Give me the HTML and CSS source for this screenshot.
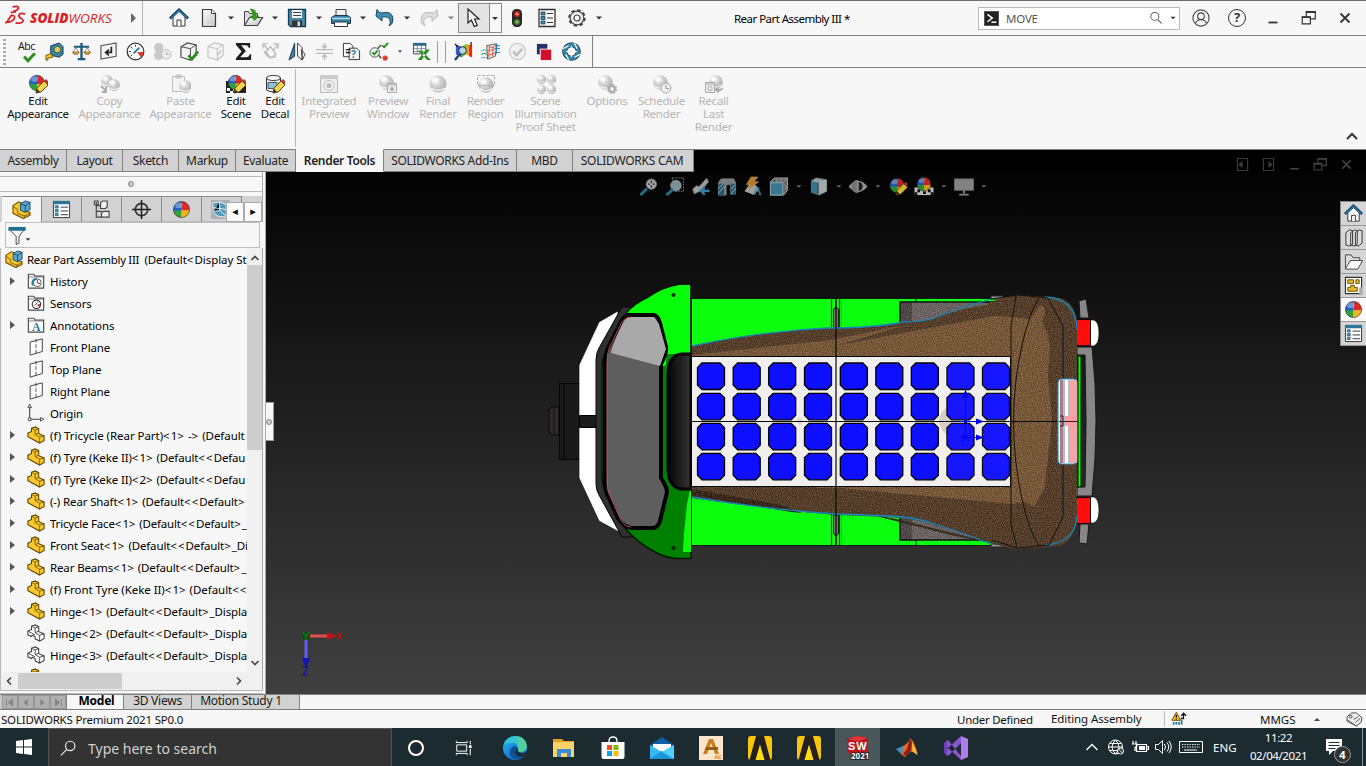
FILE: index.html
```html
<!DOCTYPE html>
<html lang="en">
<head>
<meta charset="utf-8">
<title>Rear Part Assembly III</title>
<link rel="stylesheet" href="styles.css">
</head>
<body>
<svg class="sprite" aria-hidden="true">
<defs>
<linearGradient id="gg" x1="0" y1="0" x2="1" y2="1"><stop offset="0" stop-color="#fff"/><stop offset="1" stop-color="#c4c4c4"/></linearGradient>
<radialGradient id="gs" cx=".35" cy=".3" r=".7"><stop offset="0" stop-color="#fff"/><stop offset=".5" stop-color="#d0d0d0"/><stop offset="1" stop-color="#b0b0b0"/></radialGradient>
<linearGradient id="edge" x1="0" y1="0" x2="1" y2="1"><stop offset="0" stop-color="#2cc3e8"/><stop offset=".5" stop-color="#1683d8"/><stop offset="1" stop-color="#0c59a4"/></linearGradient>
</defs>
<symbol id="dd" viewBox="0 0 22 20"><path d="M8 8.500h6l-3 3z" fill="#333"/></symbol>
<symbol id="home" viewBox="0 0 20 20"><path d="M4 9v9h12V9l-6-6z" fill="#f8f8f8" stroke="#333"/><path d="M8 18v-6h4v6" fill="#fff" stroke="#333"/><path d="M1 10.500L10 2l9 8.500" fill="none" stroke="#12405c" stroke-width="3"/><path d="M2 10L10 2.500 18 10" fill="none" stroke="#2f83ab" stroke-width="1.200"/></symbol>
<symbol id="new" viewBox="0 0 20 20"><path d="M3.500 1.500h9l4 4v13h-13z" fill="url(#gg)" stroke="#3a3a3a" stroke-width="1.200"/><path d="M12.500 1.500v4h4" fill="#fff" stroke="#3a3a3a"/></symbol>
<symbol id="open" viewBox="0 0 20 20"><path d="M1.500 17.500v-14h4l1 2h8v3" fill="#ddd" stroke="#444"/><path d="M1.500 17.500l5-8h13l-5 8z" fill="url(#gg)" stroke="#444" stroke-width="1.200"/><path d="M7 1q7 0 6 7h3l-4.500 4.500L7.500 8H10q0-4-3-7z" fill="#36a01c" stroke="#217010" stroke-width=".5"/></symbol>
<symbol id="save" viewBox="0 0 20 20"><path d="M1.500 1.500h17v17H3.500l-2-2z" fill="#4389ab" stroke="#173a50" stroke-width="1.300"/><path d="M5 2h10v8H5z" fill="#f4f4f4"/><path d="M6 4.500h8M6 7.500h8" stroke="#444"/><path d="M5 12.500h10V18H5z" fill="#333"/><path d="M10.500 13.500h2.500V18h-2.500z" fill="#ddd"/></symbol>
<symbol id="print" viewBox="0 0 20 20"><path d="M5 9V1.500h10V9" fill="#eee" stroke="#444"/><path d="M.5 9.500l3-2h13l3 2v6h-19z" fill="#3583a8" stroke="#173a50"/><path d="M1 10.500h18" stroke="#b8e4f5" stroke-width="1.500"/><path d="M3.500 14h13v4.500h-13z" fill="#fff" stroke="#333"/></symbol>
<symbol id="undo" viewBox="0 0 20 20"><path d="M6 5q12-3 12 7 0 4-4 6 2-3 1-6-1-4-8-3v4L1 8 2 1.500l2.500 3z" fill="#438bb0" stroke="#174760"/></symbol>
<symbol id="redo" viewBox="0 0 20 20"><path d="M14 5Q2 2 2 12q0 4 4 6-2-3-1-6 1-4 8-3v4l6-5-1-6.500-2.500 3z" fill="#ddd" stroke="#bbb"/></symbol>
<symbol id="cursor" viewBox="0 0 20 20"><path d="M4 1v14l3.300-3 3 6.500 3-1.200L10.500 11H15z" fill="#f9f9f9" stroke="#222" stroke-width="1.200"/></symbol>
<symbol id="light" viewBox="0 0 20 20"><rect x="5" y="1" width="10" height="18" rx="4.500" fill="#272727"/><circle cx="10" cy="6" r="3" fill="#cc2413"/><circle cx="10" cy="14" r="3" fill="#37821f"/><path d="M10 4.500v3M8.500 6h3M10 12.500v3M8.500 14h3" stroke="#f4d2ca" stroke-width=".7"/></symbol>
<symbol id="list" viewBox="0 0 20 20"><path d="M2 1.500h16v17H2z" fill="#fafafa" stroke="#333" stroke-width="1.300"/><path d="M4 4h4v3H4zM4 8.500h4v3H4zM4 13h4v3H4z" fill="#3d8fb5" stroke="#173a50" stroke-width=".8"/><path d="M10 5.500h6M10 10h6M10 14.500h6" stroke="#333"/></symbol>
<symbol id="gear" viewBox="0 0 20 20"><circle cx="10" cy="10" r="7.800" fill="none" stroke="#444" stroke-width="2" stroke-dasharray="3.300 2.830"/><circle cx="10" cy="10" r="6.800" fill="#eee" stroke="#444" stroke-width="1.200"/><circle cx="10" cy="10" r="3" fill="#f7f7f7" stroke="#444" stroke-width="1.200"/></symbol>
<symbol id="tape" viewBox="0 0 20 20"><path d="M6 4l9-3 4 4v8l-4 3-9-2z" fill="#3b82a8" stroke="#173a50"/><circle cx="13" cy="8" r="3.500" fill="#e8c85a" stroke="#264"/><path d="M1 14l6-2 1 4-5 1v2H1z" fill="#f6c52a" stroke="#6b5300"/></symbol>
<symbol id="scale" viewBox="0 0 20 20"><path d="M10 1v16" stroke="#1d5a7a" stroke-width="2.500"/><path d="M2 5h16M6 18h8" stroke="#1d5a7a" stroke-width="2.200"/><path d="M1 11l3-5 3 5zM13 11l3-5 3 5z" fill="#fff" stroke="#555" stroke-width=".7"/><path d="M.5 10.500h7L6 13H2zM12.500 10.500h7L18 13h-4z" fill="#e0a73a" stroke="#7b5310" stroke-width=".7"/></symbol>
<symbol id="meas" viewBox="0 0 20 20"><path d="M2 4l16-3v14L2 18z" fill="#f4f4f4" stroke="#555" stroke-width="1.200"/><path d="M13 5v6H8m2.500-3L7 11l3.500 3" fill="none" stroke="#222" stroke-width="1.800"/></symbol>
<symbol id="gauge" viewBox="0 0 20 20"><circle cx="10" cy="10" r="8.800" fill="#fafafa" stroke="#333" stroke-width="1.300"/><path d="M12 10.500h6.500a8 8 0 0 1-3 5.500z" fill="#dc3a24"/><path d="M10 3v2M3 10h2M5 5l1.500 1.500M5 15l1.500-1.500" stroke="#333"/><path d="M8 12l6-6" stroke="#2878a0" stroke-width="2"/></symbol>
<symbol id="perf" viewBox="0 0 20 20"><circle cx="6" cy="6" r="5" fill="#c9c9c9"/><circle cx="6" cy="14" r="5" fill="#c9c9c9"/><circle cx="14" cy="13" r="5" fill="#eee" stroke="#bbb"/><path d="M14 10v3h3" stroke="#aaa" fill="none"/></symbol>
<symbol id="cube" viewBox="0 0 20 20"><path d="M1 5l7-4 9 2v11l-6 5-10-3z" fill="#f5f5f5" stroke="#444" stroke-width="1.200"/><path d="M1 5l10 2 6-4M11 7v12" fill="none" stroke="#444"/></symbol>
<symbol id="cubeck" viewBox="0 0 20 20"><use href="#cube"/><path d="M9 14l3.500 4L19 10" fill="none" stroke="#2d8f1e" stroke-width="3"/></symbol>
<symbol id="cubeg" viewBox="0 0 20 20"><g opacity=".3"><use href="#cube"/><path d="M10 11l2 2 3-4" fill="none" stroke="#555" stroke-width="1.500"/></g></symbol>
<symbol id="sigma" viewBox="0 0 20 20"><path d="M2 1h15v5h-1.500Q15 3.500 12 3.500H7.500l5 6L6.500 16H13q3 0 3.500-3H18v6H2v-2l6-7-6-7z" fill="#1e1e1e"/></symbol>
<symbol id="arrg" viewBox="0 0 20 20"><path d="M5 10l5-5 6 8-6 4zM2 7V2h5M2 2l6 7M13 2h5v5M18 2l-5 7M3 10l5 6h8" fill="none" stroke="#bcbcbc" stroke-width="1.400"/></symbol>
<symbol id="mirror" viewBox="0 0 20 20"><path d="M7 1v14l-6 4z" fill="#3b82a8" stroke="#173a50"/><path d="M10 1v14l5 4V6zM14 8l4 5-3 6z" fill="#f4f4f4" stroke="#444"/></symbol>
<symbol id="thick" viewBox="0 0 20 20"><path d="M1 8h18M1 12h18M10 1v5M7.500 4L10 6.500 12.500 4M10 19v-5M7.500 16l2.500-2.500 2.500 2.500" fill="none" stroke="#bbb" stroke-width="1.500"/></symbol>
<symbol id="comp" viewBox="0 0 20 20"><circle cx="6" cy="11" r="5" fill="#eee" stroke="#555"/><path d="M3.500 11l2 2 3.500-4M14 3.500l2 2L20 1" fill="none" stroke="#2d8f1e" stroke-width="2"/><path d="M9 7l4-4M10 14l3 3" stroke="#333" stroke-width="1.300"/><path d="M15 15l4 4M19 15l-4 4M17 14v6M14 17h6" stroke="#d8321f" stroke-width="1.200"/></symbol>
<symbol id="xls" viewBox="0 0 20 20"><path d="M1.500 1.500h13v11h-13z" fill="#fff" stroke="#345"/><path d="M1 1h14v3H1z" fill="#2b6c8c"/><path d="M2 7h12M2 10h12M5.500 3v9M10 3v9" stroke="#678" stroke-width=".8"/><path d="M6 9h4l10 10h-4zM19 8h-4L6 19h4z" fill="#2a8f25"/></symbol>
<symbol id="sim" viewBox="0 0 20 20"><path d="M2 3l6 2 5-3 6 2v12l-6-3-5 3-6-3z" fill="#ef9c1f"/><path d="M8 5l5-3v11l-5 3z" fill="#57d24d"/><path d="M2 3l6 2v11l-6-3z" fill="#3858d0"/><path d="M16 3l3 1v12l-3-1z" fill="#e22"/><circle cx="9" cy="9" r="4" fill="#b5d4e2" stroke="#234"/><path d="M1 19l5-6" stroke="#174a68" stroke-width="2.500"/><path d="M1 2l3 3M18 0v4" stroke="#111" stroke-width="1.300"/></symbol>
<symbol id="flow" viewBox="0 0 20 20"><path d="M6 4l8-2 3 1-2 12-8 3z" fill="#f7e2da" stroke="#555"/><path d="M8 5l6 1M7 9l7-1M8 14l6-2M9 5l-1 11M13 4l-1 11" stroke="#d65b4b"/><path d="M0 10q4-4 6 0M0 14q4-4 6 0M0 17q4-2 6 0" fill="none" stroke="#2ca8c9"/><path d="M14 4h6M14 7h6M14 11h6M16 1v12" stroke="#1e80c0"/><path d="M1 12h5" stroke="#4aa63d"/></symbol>
<symbol id="okg" viewBox="0 0 20 20"><circle cx="10" cy="10" r="8.500" fill="#f0f0f0" stroke="#ccc" stroke-width="1.300"/><path d="M5.500 10l3.500 4 6-7" fill="none" stroke="#bdbdbd" stroke-width="2.500"/></symbol>
<symbol id="sq2" viewBox="0 0 20 20"><path d="M2 2h11v11H2z" fill="#25316d"/><path d="M5 7h12v12H5z" fill="#f7f7f7"/><path d="M6 8h11v11H6z" fill="#d2102c"/></symbol>
<symbol id="swirl" viewBox="0 0 20 20"><circle cx="10" cy="10" r="7" fill="none" stroke="#123c55" stroke-width="5.600"/><circle cx="10" cy="10" r="7" fill="none" stroke="#3a86a8" stroke-width="3.800"/><path d="M13 1l3 6M19 13l-6 3M7 19l-3-6M1 7l6-3" stroke="#f0f6f8" stroke-width="1.300"/><path d="M10 4l2 4 4 2-4 2-2 4-2-4-4-2 4-2z" fill="#fff"/></symbol>
<symbol id="ball" viewBox="0 0 20 20"><clipPath id="bc"><circle cx="10" cy="10" r="8.500"/></clipPath><g clip-path="url(#bc)"><path d="M0 0h10v12H0z" fill="#2362c9"/><path d="M10 0h10v11H10z" fill="#dc2b25"/><path d="M0 11h10v9H0z" fill="#2ea43a"/><path d="M10 11h10v9H10z" fill="#f2b51e"/><ellipse cx="7" cy="5.500" rx="4" ry="3" fill="#fff" opacity=".35"/></g><circle cx="10" cy="10" r="8.500" fill="none" stroke="#333" stroke-width=".7"/></symbol>
<symbol id="pencil" viewBox="0 0 20 20"><path d="M8 19l1-5 7-7 4 4-7 7z" fill="#f4d44a" stroke="#5a4300"/><path d="M16 7l2-2 3.500 3.500-2 2z" fill="#b33a3a"/><path d="M8 19l1-4 3 3z" fill="#333"/></symbol>
<symbol id="eapp" viewBox="0 0 20 20"><use href="#ball" width="18" height="18"/><use href="#pencil" width="20" height="20"/></symbol>
<symbol id="escene" viewBox="0 0 20 20"><path d="M0 7h20v12H0z" fill="#222"/><path d="M1 14h3v3H1zM7 14h3v3H7zM4 17h3v2H4zM16 8h3v3h-3z" fill="#fff"/><use href="#ball" x="1" width="17" height="17"/><use href="#pencil" width="20" height="20"/></symbol>
<symbol id="edecal" viewBox="0 0 20 20"><path d="M1.500 4v12q7 4 14 0V4" fill="#eee" stroke="#333"/><ellipse cx="8.500" cy="4" rx="7" ry="2.500" fill="#fff" stroke="#333"/><path d="M3 8.500h9v6H3z" fill="#8cc2dd" stroke="#555"/><use href="#pencil" width="20" height="20"/></symbol>
<symbol id="s1" viewBox="0 0 20 20"><circle cx="10" cy="10" r="8.500" fill="url(#gs)"/><ellipse cx="7" cy="6" rx="3.500" ry="2.500" fill="#fff" opacity=".7"/><path d="M3 14q7 5 14 0" fill="none" stroke="#f5f5f5" stroke-width="1.500"/></symbol>
<symbol id="copyg" viewBox="0 0 20 20"><use href="#s1" width="14" height="14"/><use href="#s1" x="7" y="4" width="14" height="14"/><path d="M1 12l5 5M6 13v5H2" fill="none" stroke="#aaa" stroke-width="1.800"/></symbol>
<symbol id="pasteg" viewBox="0 0 20 20"><path d="M1.500 2.500h12v15h-12zM5 1h5v3H5z" fill="#f4f4f4" stroke="#bbb"/><use href="#s1" x="7" y="5" width="15" height="15"/></symbol>
<symbol id="intg" viewBox="0 0 20 20"><path d="M1.500 1.500h17v17h-17z" fill="#eee" stroke="#bbb"/><path d="M1 1h18v4H1z" fill="#ccc"/><circle cx="10" cy="11.500" r="5" fill="#f5f5f5" stroke="#bbb"/><circle cx="10" cy="11.500" r="2.500" fill="#bbb"/></symbol>
<symbol id="prevg" viewBox="0 0 20 20"><use href="#s1" width="17" height="17"/><path d="M9.500 9.500h9v9h-9zM9 11h10" fill="#eee" stroke="#aaa"/><circle cx="14" cy="15" r="2" fill="#aaa"/></symbol>
<symbol id="regg" viewBox="0 0 20 20"><use href="#s1" y="2" width="20" height="18"/><path d="M1.500 1.500h17v10h-17z" fill="none" stroke="#aaa" stroke-dasharray="3 1.500"/></symbol>
<symbol id="quadg" viewBox="0 0 20 20"><use href="#s1" width="11" height="11"/><use href="#s1" x="10" width="11" height="11"/><use href="#s1" y="10" width="11" height="11"/><use href="#s1" x="10" y="10" width="11" height="11"/></symbol>
<symbol id="optg" viewBox="0 0 20 20"><use href="#s1" width="17" height="17"/><circle cx="15" cy="15" r="3" fill="#eee" stroke="#aaa" stroke-width="2"/><circle cx="15" cy="15" r="4.300" fill="none" stroke="#aaa" stroke-width="1.500" stroke-dasharray="1.800 1.580"/></symbol>
<symbol id="schg" viewBox="0 0 20 20"><use href="#s1" width="17" height="17"/><circle cx="14" cy="14" r="5" fill="#eee" stroke="#aaa"/><path d="M14 11v3.500h3" fill="none" stroke="#999"/></symbol>
<symbol id="recg" viewBox="0 0 20 20"><use href="#s1" x="4" width="16" height="16"/><path d="M1.500 8.500h9v10h-9zM1 10h10" fill="#eee" stroke="#aaa"/><circle cx="6" cy="14.500" r="2.200" fill="none" stroke="#aaa"/><path d="M19 12q0 3-4 3v-2.500L10.500 16l4.500 3.500V17q5 0 4-5z" fill="#aaa"/></symbol>
<symbol id="part" viewBox="0 0 20 20"><path d="M5 2.500L9 1l4 2v5.500l6 2.500v5L14 19 1 12V8l4-2z" fill="#fbc72e" stroke="#5d4500" stroke-width="1.200"/><path d="M5 2.500l4 2L13 3M9 4.500v5l5 3 5-1.500M14 12.500V19M9 9.500l4-1.500" fill="none" stroke="#7b5c05"/></symbol>
<symbol id="partw" viewBox="0 0 20 20"><path d="M5 2.500L9 1l4 2v5.500l6 2.500v5L14 19 9 16.500V14l-3-1.500L5 14l-4-2V8l4-2z" fill="#fff" stroke="#444" stroke-width="1.200"/><path d="M5 2.500l4 2L13 3M9 4.500v5l5 3 5-1.500M14 12.500V19M9 9.500l4-1.500M1 8l4 2 4 2" fill="none" stroke="#444"/></symbol>
<symbol id="asm" viewBox="0 0 20 20"><path d="M1 6l6-4 5 2v7l7 2v3l-7 3.500L1 14z" fill="#fbc72e" stroke="#6e5200" stroke-width="1.200"/><path d="M1 7l5 3v4l7 3 6-3M13 16v3" fill="none" stroke="#7b5c05"/><path d="M9 4l5-3 5 1.500V10l-5 3-5-2z" fill="#5ba4c9" stroke="#1a4d6b"/><path d="M9 4l5 2 5-3.500M14 6v7" fill="none" stroke="#1a4d6b"/></symbol>
<symbol id="props" viewBox="0 0 20 20"><path d="M1.500 1.500h17v17h-17z" fill="#fff" stroke="#333"/><path d="M1 1h18v3.500H1z" fill="#2c7798"/><path d="M3.500 6h3v2.500h-3zM3.500 10h3v2.500h-3zM3.500 14h3v2.500h-3z" fill="#4b9cc0" stroke="#1a4d6b" stroke-width=".7"/><path d="M9 7.500h8M9 11.500h8M9 15.500h8" stroke="#333"/></symbol>
<symbol id="config" viewBox="0 0 20 20"><path d="M4.500 2v16h6M4.500 6H12M4.500 12h6M2.500 1h4v4h-4z" fill="none" stroke="#444" stroke-width="1.200"/><path d="M9 3l2-2h5v6l-2 2H9zM10 14l2-2h6v6h-8z" fill="#eee" stroke="#444" stroke-width="1.200"/></symbol>
<symbol id="target" viewBox="0 0 20 20"><circle cx="10" cy="10" r="6.500" fill="none" stroke="#333" stroke-width="1.800"/><path d="M10 0v20M0 10h20" stroke="#222" stroke-width="1.600"/></symbol>
<symbol id="camx" viewBox="0 0 20 20"><path d="M0 0h20v20H0z" fill="#aab0b4"/><path d="M2 3l7-1 7 3v13l-9-1-5-5z" fill="#4d9cc2" stroke="#eee"/><path d="M2 8l14 2M9 2v9l-6 1M9 11l7 6" stroke="#eee"/></symbol>
<symbol id="filter" viewBox="0 0 24 20"><path d="M1 3h17l-6 8v7l-3 1.500V11z" fill="#f4f4f4" stroke="#444"/><path d="M1 1h18v4H1z" fill="#1d7092"/><path d="M19 13h5l-2.500 2.500z" fill="#333"/></symbol>
<symbol id="folder" viewBox="0 0 20 20"><path d="M1.500 18V2.500h6l1.500 2h9.500V18z" fill="#fbfbfb" stroke="#4c4c4c" stroke-width="1.300"/><path d="M2 5.500h16" stroke="#777"/></symbol>
<symbol id="hist" viewBox="0 0 20 20"><use href="#folder"/><circle cx="11.500" cy="12" r="4.300" fill="#fff" stroke="#555"/><path d="M6.500 15Q4 8 11 7.500" fill="none" stroke="#297ba0" stroke-width="2"/><path d="M11.500 9v3l3 1" fill="none" stroke="#333"/></symbol>
<symbol id="sens" viewBox="0 0 20 20"><use href="#folder"/><circle cx="10.500" cy="11.500" r="4.700" fill="#fff" stroke="#333" stroke-width="1.200"/><path d="M10.500 12l4-1v4z" fill="#d32"/><path d="M8 13l4-4" stroke="#444"/></symbol>
<symbol id="plane" viewBox="0 0 20 20"><path d="M3.500 4.500L17 1v14L3.500 19z" fill="#fff" stroke="#444" stroke-width="1.100"/><path d="M10 1v18" stroke="#444" stroke-dasharray="4 2"/></symbol>
<symbol id="origin" viewBox="0 0 20 20"><path d="M3 4v13h13" fill="none" stroke="#444" stroke-width="1.200"/><path d="M1 4l2-4 2 4zM15 15l4 2-4 2zM1.500 15.500h3v3h-3z" fill="#fff" stroke="#444"/></symbol>
<symbol id="mag" viewBox="0 0 20 20"><circle cx="12.500" cy="7.500" r="5.500" fill="#bfc4c6" stroke="#777"/><path d="M1 19l7-7" stroke="#2b7fa6" stroke-width="3"/></symbol>
<symbol id="vfit" viewBox="0 0 20 20"><use href="#mag"/><path d="M12.500 4v7M9 7.500h7" stroke="#222" stroke-width="1.500"/><circle cx="12.500" cy="7.500" r="1.400" fill="#ccc"/></symbol>
<symbol id="varea" viewBox="0 0 20 20"><path d="M7 1h12v14H9z" fill="none" stroke="#888" stroke-dasharray="2 1"/><circle cx="11" cy="9" r="5.500" fill="#92a9b3" stroke="#aaa"/><path d="M1 19l7-6" stroke="#2b7fa6" stroke-width="3"/></symbol>
<symbol id="vprev" viewBox="0 0 20 20"><path d="M1 13l4-4 3 1 8-9 2 4-7 9-8 4z" fill="#b9b9b9" stroke="#666"/><path d="M19 14.500h-8m3-4l-4 4 4 4" stroke="#3b93be" stroke-width="2.600" fill="none"/></symbol>
<symbol id="vsec" viewBox="0 0 20 20"><path d="M1 6l3-4h13l2 4v12h-5V9q-3-3-5 0v10H1z" fill="#8a959a" stroke="#999"/><path d="M1 7h6v12H1zM14 7h5v12h-5z" fill="#246483"/><path d="M1 12l5-5M1 17l6-7M14 13l5-5M14 18l5-6" stroke="#b3cad4"/></symbol>
<symbol id="vori" viewBox="0 0 20 20"><path d="M1 5l4-4h14v13l-4 5H1z" fill="#777" stroke="#bbb"/><path d="M1 6h13v13H1z" fill="#448baa" stroke="#9cc4d5"/><path d="M14 6l5-5M8 2v3M12 2v3M16 8l2 3M16 13l2-2" stroke="#bbb"/></symbol>
<symbol id="vdisp" viewBox="0 0 20 20"><path d="M2 4l5-3 11 2v12l-8 4-8-3z" fill="#a8bbc3" stroke="#888"/><path d="M2 4l7 2v13l-7-3z" fill="#3d89a9"/><path d="M9 6l9-3v12l-9 4z" fill="#bdc5c8"/><path d="M9 6v13" stroke="#333"/></symbol>
<symbol id="eye" viewBox="0 0 20 20"><path d="M0 10q10-12 20 0-10 12-20 0z" fill="#aaa"/><circle cx="10" cy="10" r="5" fill="#222"/><path d="M10 3a7 7 0 0 0 0 14z" fill="#888"/><path d="M10 5v10" stroke="#ddd"/></symbol>
<symbol id="vscene" viewBox="0 0 20 20"><path d="M0 11h20v8H0z" fill="#ddd"/><path d="M3 13h3v3H3zM9 15h3v3H9zM14 13h3v3h-3zM0 16h3v3H0zM17 16h3v3h-3z" fill="#111"/><use href="#ball" x="1.500" y="-1" width="17" height="17"/></symbol>
<symbol id="monitor" viewBox="0 0 20 20"><path d="M0 2h20v12H0z" fill="#999" stroke="#777"/><path d="M9 14h2v3H9zM5 17.500h10v2H5z" fill="#999"/></symbol>
<symbol id="vdd" viewBox="0 0 22 20"><path d="M7 8h8l-4 4z" fill="#777"/></symbol>
<symbol id="books" viewBox="0 0 20 20"><path d="M2 5l4-3 3 1v14l-3 2-4-1zM7 5l4-3 3 1v14l-3 2-4-1zM12 5l4-3 3 1v13l-4 3-3-1z" fill="#ddd" stroke="#333"/></symbol>
<symbol id="fold2" viewBox="0 0 20 20"><path d="M1.500 18V3h6l2 3h7v3" fill="#ddd" stroke="#444"/><path d="M1.500 18l5-9h13l-5 9z" fill="#fff" stroke="#444"/></symbol>
<symbol id="palette" viewBox="0 0 20 20"><path d="M1.500 1.500h17v17h-17z" fill="#fff" stroke="#333" stroke-width="1.200"/><path d="M4 4h6v4H4zM12.500 4H16v4h-3.500zM4 16h10v-4h-3v-2H7v2H4z" fill="#eab72a" stroke="#6b5000"/><path d="M16 12h3v7h-3z" fill="#aaa"/></symbol>
<symbol id="user" viewBox="0 0 20 20"><circle cx="10" cy="10" r="9" fill="none" stroke="#444" stroke-width="1.200"/><circle cx="10" cy="8" r="3.700" fill="none" stroke="#444" stroke-width="1.200"/><path d="M4 16q1-4 6-4t6 4" fill="none" stroke="#444" stroke-width="1.200"/></symbol>
<symbol id="restore" viewBox="0 0 20 20"><path d="M2.500 9h9v7.500h-9zM7 8V3h10v8h-5" fill="none" stroke="currentColor" stroke-width="1.300"/><path d="M6.500 3.500h11M2 9h10" stroke="currentColor" stroke-width="2"/></symbol>
<symbol id="close" viewBox="0 0 20 20"><path d="M5 5l10 10M15 5L5 15" stroke="currentColor" stroke-width="2"/></symbol>
<symbol id="mini" viewBox="0 0 20 20"><path d="M5 15h10" stroke="currentColor" stroke-width="2"/></symbol>
<symbol id="find" viewBox="0 0 20 20"><circle cx="8.500" cy="8" r="5" fill="none" stroke="currentColor" stroke-width="1.400"/><path d="M12 12l5 5" stroke="currentColor" stroke-width="1.700"/></symbol>
<symbol id="ds" viewBox="0 0 24 24"><path d="M9 2.500q6-1.500 6 1t-5.500 4M1 19q9-1 10-5 .5-3-3.500-2.500L2.500 19M7 8.500q4-1 5.500-.5M22 10q-5-2-6.500 1-.5 2 3 4t-.500 4q-3 1-6 0" fill="none" stroke="#da1f26" stroke-width="1.800"/></symbol>
<symbol id="win" viewBox="0 0 20 20"><path d="M2 4l7-1v6.500H2zM10 2.900L18 2v7.500h-8zM2 10.500h7V17l-7-1zM10 10.500h8V18l-8-1z" fill="#fff"/></symbol>
<symbol id="task" viewBox="0 0 20 20"><path d="M2.500 6.500h11v7h-11zM2 2v2h12V2M2 18v-2h12v2M17.500 2v4M17.500 11v7" fill="none" stroke="#fff" stroke-width="1.100"/><path d="M16 7h3v3h-3z" fill="#fff"/></symbol>
<symbol id="edgei" viewBox="0 0 24 24"><circle cx="12" cy="12" r="12" fill="url(#edge)"/><path d="M1 8Q5 0 13 0q9 1 11 10 0 6-7 6-4-1-2-4-1-6-7-5-5 0-7 1z" fill="#35c4d6"/><path d="M14 0q9 1 10 10 0 6-7 6-4-1-2-4 1-7-1-12z" fill="#5bd981" opacity=".65"/><path d="M15 12q-2 4 3 5 4 .5 6-2-4 9-12 8-6-2-5-8 1-4 5-5z" fill="#104f95"/><path d="M15.500 12.500q-2 3 2 4.500 3 1 6-1l-2 4q-6 2-9-2-1-4 3-5.500z" fill="#1a2d34"/></symbol>
<symbol id="files" viewBox="0 0 24 24"><path d="M1 3h9l2 2h10v15H1z" fill="#e4a019"/><path d="M1 6h21v15H1z" fill="#fbd267"/><path d="M5 13h14v8h-4v-4H9v4H5z" fill="#3a8dd4"/></symbol>
<symbol id="store" viewBox="0 0 24 24"><path d="M8 7V5q0-4 4-4t4 4v2" fill="none" stroke="#fff" stroke-width="1.300"/><path d="M.5 6h23v15q0 2-2 2h-19q-2 0-2-2z" fill="#fff"/><path d="M6 9h5v5H6z" fill="#f25022"/><path d="M12.500 9h5v5h-5z" fill="#7fba00"/><path d="M6 15h5v5H6z" fill="#00a4ef"/><path d="M12.500 15h5v5h-5z" fill="#ffb900"/></symbol>
<symbol id="mail" viewBox="0 0 24 24"><path d="M0 9l12-8 12 8v14H0z" fill="#0f5fa8"/><path d="M3 8h18v8H3z" fill="#fff"/><path d="M0 9l12 7L24 9v14H0z" fill="#35b7f1"/><path d="M0 23l12-8 12 8z" fill="#1d92dd"/><path d="M24 9v14L12 16z" fill="#4fd0fb"/></symbol>
<symbol id="yv" viewBox="0 0 24 24"><path d="M0 3q0-3 3-3h18q3 0 3 3v18q0 3-3 3H3q-3 0-3-3z" fill="#f7c60c"/><path d="M8 0h8l6.500 24H16L12 9 8 24H1.500z" fill="#252122"/><path d="M12 9l4.500 15h-9z" fill="#ffdc13"/></symbol>
<symbol id="matlab" viewBox="0 0 24 24"><path d="M1 13l7-3 3 3-4 6z" fill="#3d8fc3"/><path d="M8 10q5-2 7-8 4 2 8 17-5-4-8-3l-5 5-3-2z" fill="#e36c21"/><path d="M15 2q3 2 1 13l-5 5-3-2 4-5z" fill="#8d1d16"/><path d="M17 6q5 8 5 13l-5-4z" fill="#f8b332"/></symbol>
<symbol id="vs" viewBox="0 0 24 24"><path d="M17 0l7 3v18l-7 3z" fill="#ae7bea"/><path d="M1 6l3-2 13 16v4L1 9zM1 18l3 2L17 7V0L1 15z" fill="#8657cf"/><path d="M0 7l3-1v12l-3-1z" fill="#6c3eb5"/></symbol>
</svg>

<div class="app">
<header class="titlebar">
  <div class="brand"><svg class="dsmark"><use href="#ds"/></svg><span class="logo"><b>SOLID</b><i>WORKS</i></span><span class="play"></span></div>
  <div class="quick">
    <svg class="ic gap8"><use href="#home"/></svg><svg class="ic"><use href="#new"/></svg><svg class="ic"><use href="#dd"/></svg><svg class="ic"><use href="#open"/></svg><svg class="ic"><use href="#dd"/></svg><svg class="ic"><use href="#save"/></svg><svg class="ic"><use href="#dd"/></svg><svg class="ic"><use href="#print"/></svg><svg class="ic"><use href="#dd"/></svg><svg class="ic"><use href="#undo"/></svg><svg class="ic"><use href="#dd"/></svg><svg class="ic"><use href="#redo"/></svg><svg class="ic faded"><use href="#dd"/></svg>
    <span class="select"><span class="selmain"><svg class="ic20"><use href="#cursor"/></svg></span><span class="seldd"></span></span>
    <svg class="ic gap8"><use href="#light"/></svg><svg class="ic gap8"><use href="#list"/></svg><svg class="ic"><use href="#gear"/></svg><svg class="ic"><use href="#dd"/></svg>
  </div>
  <div class="doctitle">Rear Part Assembly III *</div>
  <div class="search"><span class="cmd"><svg viewBox="0 0 16 16"><path d="M3 3l6 4.500-6 4.500M8 12.500h6" fill="none" stroke="#fff" stroke-width="1.800"/></svg></span><span class="move">MOVE</span><svg class="sfind"><use href="#find"/></svg><svg class="sdd"><use href="#dd"/></svg></div>
  <div class="winctl"><svg><use href="#user"/></svg><span class="help">?</span><svg><use href="#mini"/></svg><svg><use href="#restore"/></svg><svg><use href="#close"/></svg></div>
</header>

<div class="toolrow">
  <div class="tools">
    <span class="grip"></span>
    <span class="spell">Abc<svg viewBox="0 0 12 9"><path d="M1 4l3.500 4L11 1" fill="none" stroke="#2d8f1e" stroke-width="2.600"/></svg></span><svg><use href="#tape"/></svg><svg><use href="#scale"/></svg><svg><use href="#meas"/></svg><svg><use href="#gauge"/></svg><svg><use href="#perf"/></svg><svg><use href="#cubeck"/></svg><svg><use href="#cubeg"/></svg><svg><use href="#sigma"/></svg><svg><use href="#arrg"/></svg><svg><use href="#mirror"/></svg><svg><use href="#thick"/></svg><svg viewBox="0 0 20 20"><path d="M1.500 1.500h7l3 3v11h-10z" fill="#fff" stroke="#333"/><path d="M7.500 6.500h8l3 3v9h-11z" fill="#f6f6f6" stroke="#333"/><path d="M4 8h5M4 11h5" stroke="#222" stroke-width="1.500"/><text x="9.500" y="16.500" class="q-text">?</text></svg><svg><use href="#comp"/></svg><svg class="narrow"><use href="#dd"/></svg><svg><use href="#xls"/></svg><span class="seps"></span><svg><use href="#sim"/></svg><svg><use href="#flow"/></svg><svg><use href="#okg"/></svg><svg><use href="#sq2"/></svg><svg><use href="#swirl"/></svg>
  </div>
</div>

<div class="ribbon">
  <div class="rgroup first">
    <div class="rb w72"><svg><use href="#eapp"/></svg><span>Edit<br>Appearance</span></div>
    <div class="rb w71 off"><svg><use href="#copyg"/></svg><span>Copy<br>Appearance</span></div>
    <div class="rb w71 off"><svg><use href="#pasteg"/></svg><span>Paste<br>Appearance</span></div>
    <div class="rb w40"><svg><use href="#escene"/></svg><span>Edit<br>Scene</span></div>
    <div class="rb w38"><svg><use href="#edecal"/></svg><span>Edit<br>Decal</span></div>
  </div>
  <div class="rgroup">
    <div class="rb w60 off"><svg><use href="#intg"/></svg><span>Integrated<br>Preview</span></div>
    <div class="rb w58 off"><svg><use href="#prevg"/></svg><span>Preview<br>Window</span></div>
    <div class="rb w42 off"><svg><use href="#s1"/></svg><span>Final<br>Render</span></div>
    <div class="rb w53 off"><svg><use href="#regg"/></svg><span>Render<br>Region</span></div>
    <div class="rb w67 off"><svg><use href="#quadg"/></svg><span>Scene<br>Illumination<br>Proof Sheet</span></div>
    <div class="rb w56 off"><svg><use href="#optg"/></svg><span>Options</span></div>
    <div class="rb w53 off"><svg><use href="#schg"/></svg><span>Schedule<br>Render</span></div>
    <div class="rb w51 off"><svg><use href="#recg"/></svg><span>Recall<br>Last<br>Render</span></div>
  </div>
  <svg class="collapse" viewBox="0 0 12 8"><path d="M1 7l5-5 5 5" fill="none" stroke="#333" stroke-width="2"/></svg>
</div>

<nav class="cmdtabs">
  <div class="tab t67">Assembly</div><div class="tab t56">Layout</div><div class="tab t56">Sketch</div><div class="tab t57">Markup</div><div class="tab t60">Evaluate</div><div class="tab t88 on">Render Tools</div><div class="tab t133">SOLIDWORKS Add-Ins</div><div class="tab t56">MBD</div><div class="tab t121">SOLIDWORKS CAM</div>
  <div class="docctl"><svg viewBox="0 0 20 20"><path d="M4 3h12v14H4z" fill="none" stroke="#3b3b3b" stroke-width="1.300"/><path d="M10 6v8l-5-4z" fill="#3b3b3b"/></svg><svg viewBox="0 0 20 20"><path d="M4 3h12v14H4z" fill="none" stroke="#3b3b3b" stroke-width="1.300"/><path d="M10 6v8l5-4z" fill="#3b3b3b"/></svg><svg><use href="#mini"/></svg><svg><use href="#restore"/></svg><svg><use href="#close"/></svg></div>
</nav>

<main class="work">
  <aside class="panel">
    <div class="strip"><div class="stripbox"></div><span class="dot"></span></div>
    <div class="ptabs">
      <div class="pt on"><svg><use href="#asm"/></svg></div><div class="pt"><svg><use href="#props"/></svg></div><div class="pt"><svg><use href="#config"/></svg></div><div class="pt"><svg><use href="#target"/></svg></div><div class="pt"><svg><use href="#ball"/></svg></div><div class="pt last"><svg><use href="#camx"/></svg></div>
      <div class="pscroll"><span>◂</span><span>▸</span></div>
    </div>
    <div class="filterbox"><svg><use href="#filter"/></svg></div>
    <div class="treebox">
      <div class="tree">
        <div class="row root"><svg><use href="#asm"/></svg><span>Rear Part Assembly III&nbsp; <span class="state">(Default<s>&lt;</s>Display St</span></span></div>
        <div class="row"><em class="exp"></em><svg><use href="#hist"/></svg><span>History</span></div>
        <div class="row"><em></em><svg><use href="#sens"/></svg><span>Sensors</span></div>
        <div class="row"><em class="exp"></em><svg viewBox="0 0 20 20"><use href="#folder"/><text x="5.500" y="17" class="a-text">A</text></svg><span>Annotations</span></div>
        <div class="row"><em></em><svg><use href="#plane"/></svg><span>Front Plane</span></div>
        <div class="row"><em></em><svg><use href="#plane"/></svg><span>Top Plane</span></div>
        <div class="row"><em></em><svg><use href="#plane"/></svg><span>Right Plane</span></div>
        <div class="row"><em></em><svg><use href="#origin"/></svg><span>Origin</span></div>
        <div class="row wide"><em class="exp"></em><svg><use href="#part"/></svg><span>(f) Tricycle (Rear Part)<s>&lt;</s>1<s>&gt;</s> -<s>&gt;</s> (Default</span></div>
        <div class="row"><em class="exp"></em><svg><use href="#part"/></svg><span>(f) Tyre (Keke II)<s>&lt;</s>1<s>&gt;</s> (Default<s>&lt;&lt;</s>Defau</span></div>
        <div class="row"><em class="exp"></em><svg><use href="#part"/></svg><span>(f) Tyre (Keke II)<s>&lt;</s>2<s>&gt;</s> (Default<s>&lt;&lt;</s>Defau</span></div>
        <div class="row"><em class="exp"></em><svg><use href="#part"/></svg><span>(-) Rear Shaft<s>&lt;</s>1<s>&gt;</s> (Default<s>&lt;&lt;</s>Default<s>&gt;</s></span></div>
        <div class="row tight"><em class="exp"></em><svg><use href="#part"/></svg><span>Tricycle Face<s>&lt;</s>1<s>&gt;</s> (Default<s>&lt;&lt;</s>Default<s>&gt;</s>_</span></div>
        <div class="row"><em class="exp"></em><svg><use href="#part"/></svg><span>Front Seat<s>&lt;</s>1<s>&gt;</s> (Default<s>&lt;&lt;</s>Default<s>&gt;</s>_Di</span></div>
        <div class="row"><em class="exp"></em><svg><use href="#part"/></svg><span>Rear Beams<s>&lt;</s>1<s>&gt;</s> (Default<s>&lt;&lt;</s>Default<s>&gt;</s>_D</span></div>
        <div class="row wide"><em class="exp"></em><svg><use href="#part"/></svg><span>(f) Front Tyre (Keke II)<s>&lt;</s>1<s>&gt;</s> (Default<s>&lt;&lt;</s></span></div>
        <div class="row"><em class="exp"></em><svg><use href="#part"/></svg><span>Hinge<s>&lt;</s>1<s>&gt;</s> (Default<s>&lt;&lt;</s>Default<s>&gt;</s>_Displa</span></div>
        <div class="row"><em></em><svg><use href="#partw"/></svg><span>Hinge<s>&lt;</s>2<s>&gt;</s> (Default<s>&lt;&lt;</s>Default<s>&gt;</s>_Displa</span></div>
        <div class="row"><em></em><svg><use href="#partw"/></svg><span>Hinge<s>&lt;</s>3<s>&gt;</s> (Default<s>&lt;&lt;</s>Default<s>&gt;</s>_Displa</span></div>
        <div class="row"><em></em><svg><use href="#part"/></svg></div>
      </div>
      <div class="vscroll"><svg viewBox="0 0 10 8"><path d="M1.500 6L5 2.500 8.500 6" fill="none" stroke="#444" stroke-width="1.600"/></svg><div class="vthumb"></div><svg viewBox="0 0 10 8"><path d="M1.500 2L5 5.500 8.500 2" fill="none" stroke="#444" stroke-width="1.600"/></svg></div>
    </div>
    <div class="hscroll"><svg viewBox="0 0 8 10"><path d="M6 1.500L2.500 5 6 8.500" fill="none" stroke="#444" stroke-width="1.600"/></svg><div class="hthumb"></div><svg viewBox="0 0 8 10"><path d="M2 1.500L5.500 5 2 8.500" fill="none" stroke="#444" stroke-width="1.600"/></svg></div>
    <div class="pbottom"></div>
  </aside>

  <section class="viewport">
    <svg class="model" viewBox="266 172 1100 522">
      <defs>
        <filter id="grain" x="0" y="0" width="1" height="1" color-interpolation-filters="sRGB"><feTurbulence type="fractalNoise" baseFrequency=".8" numOctaves="1" seed="4" result="n"/><feColorMatrix in="n" values="1.500 0 0 0 -.36 1.500 0 0 0 -.45 1.500 0 0 0 -.54 0 0 0 0 .26" result="m"/><feComposite in="m" in2="SourceGraphic" operator="in" result="c"/><feMerge><feMergeNode in="SourceGraphic"/><feMergeNode in="c"/></feMerge></filter>
        <linearGradient id="seat"><stop offset="0" stop-color="#050505"/><stop offset="1" stop-color="#363636"/></linearGradient>
        <g id="cell"><path d="M4.500 0h18l4.500 4.500v17.500l-4.500 4.500h-18L0 22V4.500z" fill="#0f0fff" stroke="#000" stroke-width="1.300"/></g>
        <g id="cellrow"><use href="#cell" x="697.500"/><use href="#cell" x="733.200"/><use href="#cell" x="768.700"/><use href="#cell" x="804.500"/><use href="#cell" x="840.300"/><use href="#cell" x="875.800"/><use href="#cell" x="911.300"/><use href="#cell" x="947"/><use href="#cell" x="982.500"/></g>
        <clipPath id="topface"><path d="M590 270h110v94h-30l-9 3-71-17z"/></clipPath>
      </defs>
      <path d="M559 407h-7l-3 3v22l3 3h7z" fill="#2c2a26" stroke="#060606"/><path d="M554 408v26" stroke="#111"/>
      <path d="M559.500 383.500h20v76h-20zM564 383v76" fill="#191919" stroke="#050505"/>
      <path d="M579 365l20-43 19-11 1 221-20-11-20-43z" fill="#fff" stroke="#111" stroke-width=".7"/>
      <path d="M579.500 415.500h17v12h-17z" fill="#1b1b1b" stroke="#000"/>
      <path d="M630 307h-8l-23 41q-3 5-3 12v124q0 6 3 11l23 42h8l20-10V317z" fill="#303030" stroke="#060606"/>
      <path d="M691 284.500h-12q-17 3-31 13-14 7-21 15-8 12-22 40-3 7-3 15v109q0 8 3 14 14 29 22 40 12 13 27 21 12 7 25 7h12z" fill="#008000" stroke="#041804" stroke-width="1.500"/>
      <path clip-path="url(#topface)" d="M690 285h-11q-17 3-31 13-14 7-20 14-6 9-24 42v12l62 0v-12h24z" fill="#06ff08"/>
      <path d="M690 490l-3 14-3 30-1 18h8v-62z" fill="#08ff09"/>
      <path d="M628 315h25q5 0 7 8l6 24q1 5-5 17v114q6 9 6 14l-7 29q-2 7-8 7h-20q-9-1-14-10l-9-20q-4-6-4-15V364q0-11 5-20l9-18q4-10 9-11z" fill="#5e5e5e" stroke="#000" stroke-width="4"/>
      <path d="M629 317h25l5 7 7 25-6 17-49-13q1-7 10-26 4-9 8-10z" fill="#a9a9a9"/>
      <path d="M632 317q-10 1-13 11l-9 18q-3 6-3 16v120q0 9 3 14l9 20q4 11 12 11" fill="none" stroke="#e85a5a" stroke-width=".8"/>
      <path d="M691 354h-9q-14 1-14 21v93q0 19 13 21h10z" fill="url(#seat)" stroke="#000" stroke-width="3"/>
      <circle cx="673.500" cy="295" r="1.500" fill="#0a5a10" stroke="#000"/><circle cx="673.500" cy="548" r="1.500" fill="#0a5a10" stroke="#000"/>
      <path d="M691.500 298.500H1000v247H691.500z" fill="#0bff0e" stroke="#061b06"/>
      <path d="M831.500 298v247M839.500 298v247M916 298v5M916 540v5" stroke="#041" stroke-width="1.200"/><path d="M836 298v247" stroke="#0a3a0a"/><path d="M841.500 299v246" stroke="#09cf0c"/>
      <path d="M833.500 328v-18q2.500-6 5 0v18zM833.500 515h5v18q-2.500 6-5 0z" fill="#757575" stroke="#222"/>
      <g filter="url(#grain)"><path d="M900 302h95l-22 30h-73zM900 540h95l-22-30h-73z" fill="#6d6b72"/><path d="M900 302h12v30h-12zM900 510h12v30h-12z" fill="#49474d"/></g>
      <path d="M997 302h-97v28M900 514v26h100" fill="none" stroke="#111" stroke-width="1.500"/>
      <path d="M991 296h12v3h-12zM991 544h12v3h-12z" fill="#999" stroke="#222"/>
      <g fill="#878787" stroke="#171717"><path d="M1079 301l7-2 3 19h-9zM1080 524h9l-2 20-8-1z"/><path d="M1077 347h15q8 73 0 149h-15v-9h8q2-66 0-132h-8z"/></g>
      <path d="M1078 356h3v131h-3z" fill="#0f0" stroke="#041804"/>
      <path d="M1090 320h4q5 2 5 13t-5 13h-4zM1090 497h4q5 2 5 13t-5 13h-4z" fill="#fff" stroke="#111" stroke-width=".7"/>
      <path d="M1076.500 319.500h14v26h-14zM1076.500 497.500h14v26h-14z" fill="#ff0e0b" stroke="#240000"/>
      <g filter="url(#grain)">
        <path d="M692 346q70-15 136-18 44 0 75-6 20 0 31-4 23-9 53-13 8-7 31-10l42 3q17 5 17 30v184q0 27-17 34l-42 3q-18-2-31-8-29-9-53-16-13-5-31-7-31-2-67-3-60-5-144-17z" fill="#503b28"/>
        <path d="M692 355l138-15 75-15-66 20 155-29 18 1 18 2 10-14 4 2q2 5-2 15l6 13 2 12-2 28 4 46-5 45-2 21-11 20-7-5-15 2-172-16-148 2z" fill="#7e5d3b"/>
        <path d="M692 487l110-1 34 3v20l-144-17z" fill="#503b28"/>
        <path d="M692 489l90 16 20 8-10-1-100-16z" fill="#2b1d14"/><path d="M836 508l60 11 105 26-50-10-75-19z" fill="#2e2117"/>
      </g>
      <path d="M692 346q70-15 136-18 44 0 75-6 20 0 31-4 23-9 57-19M1045 297q31 1 32 33M692 497q70 12 144 17 36 1 67 3 18 2 31 7 24 7 57 20M1077 515q-1 28-32 30" fill="none" stroke="#1786bd" stroke-width="1.300"/>
      <path d="M991 299l27-4 30 3 15 28v191l-14 28-31 3-27-8" fill="none" stroke="#17100a"/>
      <path d="M1016 296l-5 30v200l6 21M1039 298q-9 13-17 47-17 76 0 154 7 32 17 47" fill="none" stroke="#17100a"/>
      <path d="M691.500 356.500h319v130h-319z" fill="#f1efed" stroke="#090909"/>
      <path d="M950 405q-11 7-11 16t11 16z" fill="#d6cec6"/><path d="M796 421l4-4 3 4-3 5z" fill="#dcd6cf"/>
      <use href="#cellrow" y="363"/><use href="#cellrow" y="393.300"/><use href="#cellrow" y="423.300"/><use href="#cellrow" y="453.300"/>
      <path d="M947 363h63v118h-63z" fill="#fff" opacity=".035"/>
      <path d="M691 421.500h387M836 298v247" stroke="#080808" stroke-width="1.200"/>
      <rect x="1058" y="379" width="19" height="85" rx="4" fill="#fff" stroke="#2195cd" stroke-width="1.200"/><path d="M1070 380h7v83h-7z" fill="#f4a5aa"/><path d="M1060 380h3v83h-3z" fill="#ad7b80"/><path d="M1064 380v83M1069 380v83" stroke="#556" stroke-width=".8"/><path d="M1065 416h12v10h-12z" fill="#ff9ca4"/><path d="M1060 416h3v10h-3M1059 421.500h18" fill="none" stroke="#222"/>
      <g stroke="#0000ef" fill="#0000ef"><path d="M965.500 392v45M960 421.500h22M960 437.500h22M962 418l7 7M969 418l-7 7M962 434l7 7M969 434l-7 7" fill="none"/><path d="M965.500 389l3 9h-6zM984 421.500l-8-3v6zM984 437.500l-8-3v6z" stroke="none"/></g>
      <path d="M310 636h21" stroke="#e44c4c" stroke-width="3"/><path d="M327 632l10 4-10 4z" fill="#c01515"/><path d="M306 640v20" stroke="#655cf5" stroke-width="3"/><path d="M302 658h8l-4 10z" fill="#1414bb"/><circle cx="306" cy="636" r="4" fill="#174822"/>
      <path d="M303 632l3 4 3-4M306 636v4" fill="none" stroke="#00a000"/><path d="M337 632l5 8M342 632l-5 8" stroke="#e00000"/><path d="M303 667h5l-5 8h5" fill="none" stroke="#0000e8"/>
    </svg>
    <div class="hud"><svg><use href="#vfit"/></svg><svg><use href="#varea"/></svg><svg><use href="#vprev"/></svg><svg><use href="#vsec"/></svg><svg viewBox="0 0 20 20"><path d="M1 15L8 5l9 7-6 7z" fill="#b9b9b9"/><path d="M8 0h7l-4 5h5L4 14l3-6H3z" fill="#d98d28" stroke="#d7c18e" stroke-width=".6"/><text x="10" y="19" class="v-text">A</text></svg><svg><use href="#vori"/></svg><svg class="hd"><use href="#vdd"/></svg><svg><use href="#vdisp"/></svg><svg class="hd"><use href="#vdd"/></svg><svg><use href="#eye"/></svg><svg class="hd"><use href="#vdd"/></svg><svg><use href="#eapp"/></svg><svg><use href="#vscene"/></svg><svg class="hd"><use href="#vdd"/></svg><svg><use href="#monitor"/></svg><svg class="hd"><use href="#vdd"/></svg></div>
    <div class="handle"><span class="dot"></span></div>
    <div class="taskpane"><span><svg><use href="#home"/></svg></span><span><svg><use href="#books"/></svg></span><span><svg><use href="#fold2"/></svg></span><span><svg><use href="#palette"/></svg></span><span class="on"><svg><use href="#ball"/></svg></span><span><svg><use href="#props"/></svg></span></div>
  </section>
</main>

<div class="bottomtabs"><div class="nav"><svg viewBox="0 0 16 13"><path d="M4 3v8M11 3v8L6 7z" fill="#858585" stroke="#858585"/></svg><svg viewBox="0 0 16 13"><path d="M10 3v8L5 7z" fill="#858585"/></svg><svg viewBox="0 0 16 13"><path d="M6 3v8l5-4z" fill="#858585"/></svg><svg viewBox="0 0 16 13"><path d="M12 3v8M5 3v8l5-4z" fill="#858585" stroke="#858585"/></svg></div><div class="bt model-tab">Model</div><div class="bt views">3D Views</div><div class="bt motion">Motion Study 1</div></div>
<div class="status"><span class="prod">SOLIDWORKS Premium 2021 SP0.0</span><span class="under">Under Defined</span><span class="editing">Editing Assembly</span><span class="rebuild"><svg viewBox="0 0 18 16"><path d="M6 1l5 9H1z" fill="#fbc02b" stroke="#523c00"/><path d="M6 4v3M6 8v1M11 8h3V3m-2.500 2L14 2l3 3" fill="none" stroke="#111" stroke-width="1.500"/><path d="M2 12h2v3H2zM5 12h2v3H5zM8 12h2v3H8zM11 10h2v5h-2z" fill="#2c7798"/></svg></span><span class="units">MMGS</span><span class="up"></span><svg class="tag" viewBox="0 0 18 16"><path d="M1 5l5-4h5l6 5-1 5-5 4L1 8z" fill="#eee" stroke="#444"/><circle cx="5" cy="5" r="1.500" fill="none" stroke="#444"/><path d="M8 8l5-3M10 11l5-4M1 8v2l10 5" stroke="#555" fill="none"/></svg></div>

<footer class="taskbar">
  <div class="start"><svg><use href="#win"/></svg></div>
  <div class="tsearch"><svg viewBox="0 0 20 20"><circle cx="12" cy="7" r="5.500" fill="none" stroke="#eee" stroke-width="1.400"/><path d="M8 11l-7 7" stroke="#eee" stroke-width="1.400"/></svg><span>Type here to search</span></div>
  <div class="pins"><span><b class="ring"></b></span><span><svg class="small"><use href="#task"/></svg></span><span><svg><use href="#edgei"/></svg></span><span><svg><use href="#files"/></svg></span><span><svg><use href="#store"/></svg></span><span><svg><use href="#mail"/></svg></span><span><svg viewBox="0 0 24 24"><path d="M0 0h24v24H0z" fill="#fbe5cd"/><path d="M4 18L10 3h4l6 15h-4l-4-11-4 11z" fill="#c8811a"/><path d="M7 11h12v3H6z" fill="#9a5d10"/><text x="15.500" y="22.500" class="ag-text">AG</text></svg></span><span><svg><use href="#yv"/></svg></span><span><svg><use href="#yv"/></svg></span><span class="active"><svg viewBox="0 0 24 24"><path d="M1 3l11-3 10 2v13l-10 5-10-3z" fill="#bf1720"/><path d="M1 3l11 3 10-4M12 6v14" fill="none" stroke="#660b10"/><path d="M1 3l11-3 10 2-10 4z" fill="#e3333a"/><text x="2" y="14" class="sw-text">SW</text><text x="5" y="23" class="sy-text">2021</text></svg></span><span><svg><use href="#matlab"/></svg></span><span><svg><use href="#vs"/></svg></span></div>
  <div class="tray">
    <svg class="chev" viewBox="0 0 14 16"><path d="M1.500 11L7 5.500l5.500 5.500" fill="none" stroke="#fff" stroke-width="1.300"/></svg>
    <svg class="globe" viewBox="0 0 18 16"><circle cx="8.500" cy="8" r="7" fill="none" stroke="#fff"/><path d="M8.500 1q-7 7 0 14M8.500 1q7 7 0 14M1.500 8h14M2.500 4.500h12M2.500 11.500h12" fill="none" stroke="#fff"/><circle cx="13.500" cy="12" r="3" fill="#1b2b2f" stroke="#fff"/><path d="M11.500 10l4 4" stroke="#fff"/></svg>
    <svg class="bat" viewBox="0 0 18 16"><path d="M5.500 5.500h10v7h-10zM16 7.500h1.500v3H16M2 2v3M5 2v3M1 5h5v2L4 8.500V12" fill="none" stroke="#fff" stroke-width="1.200"/><path d="M8 7h6v4H8z" fill="#fff"/></svg>
    <svg class="vol" viewBox="0 0 18 16"><path d="M1.500 5.500h3l4-4v13l-4-4h-3zM10.500 5q2 3 0 6M13 3.500q3.500 4.500 0 9M15 2q4.500 6 0 12" fill="none" stroke="#fff"/></svg>
    <svg class="kbd" viewBox="0 0 24 16"><path d="M.5 2.500h23v11H.500z" fill="none" stroke="#fff"/><path d="M3 5.500h18M3 8h18" stroke="#fff" stroke-dasharray="1.300 1.200"/><path d="M5 11h13" stroke="#fff"/></svg>
    <span class="lang">ENG</span><span class="clock">11:22<br>02/04/2021</span>
    <span class="note"><svg viewBox="0 0 18 18"><path d="M1 1h16v12H8l-4 4v-4H1z" fill="#fff"/><path d="M3.500 4.500h11M3.500 7.500h11M3.500 10.500h7" stroke="#1b2b2f"/></svg><b>4</b></span><span class="desk"></span>
  </div>
</footer>
</div>
</body>
</html>
```
FILE: styles.css
```css
* { box-sizing: border-box; }
body { margin: 0; overflow: hidden; background: #000; font-family: "Noto Sans", "Open Sans", sans-serif; font-size: 12px; color: #1a1a1a; }
svg { display: block; flex: none; overflow: visible; }
.sprite { position: absolute; width: 0; height: 0; overflow: hidden; }
.app { width: 1366px; height: 766px; display: flex; flex-direction: column; overflow: hidden; }

.titlebar { height: 36px; flex: none; display: flex; align-items: center; background: #f7f7f7; border-top: 1px solid #6f6b6d; border-bottom: 1px solid #808080; }
.brand { width: 143px; height: 34px; flex: none; display: flex; align-items: center; padding-left: 4px; border-right: 1px solid #b5b5b5; }
.dsmark { width: 23px; height: 24px; margin-top: -4px; }
.logo { width: 102px; margin-left: 3px; color: #da1f26; font: italic 13.500px "Open Sans", sans-serif; letter-spacing: 0; white-space: nowrap; }
.logo b { font-weight: 800; }
.play { border: 5px solid transparent; border-left: 5px solid #666; border-right: 0; margin-left: -1px; }
.quick { display: flex; align-items: center; height: 34px; margin-left: 25px; width: 446px; }
.ic { width: 22px; height: 20px; }
.gap8 { margin-right: 8px; }
.faded { opacity: .6; }
.select { display: flex; width: 44px; height: 30px; margin: 0 4px 0 -4px; border: 1px solid #8a8a8a; }
.selmain { width: 31px; display: flex; align-items: center; justify-content: center; background: #e3e3e3; border-right: 1px solid #8a8a8a; }
.ic20 { width: 20px; height: 20px; }
.seldd { align-self: center; margin-left: 2px; border: 3px solid transparent; border-top-color: #333; border-bottom: 0; }
.doctitle { margin-left: 120px; width: 244px; color: #000; font-size: 11.500px; letter-spacing: -.54px; white-space: nowrap; }
.search { width: 202px; height: 23px; flex: none; display: flex; align-items: center; background: #fff; border: 1px solid #b9b9b9; padding-left: 5px; }
.cmd { width: 15px; height: 15px; flex: none; background: #222; border: 1px solid #555; }
.cmd svg { width: 13px; height: 13px; }
.move { width: 149px; flex: none; padding-left: 7px; font-size: 11.500px; color: #555; letter-spacing: -.2px; }
.sfind { width: 16px; height: 16px; color: #777; }
.sdd { width: 18px; height: 18px; }
.winctl { display: flex; align-items: center; color: #333; margin-left: 12px; gap: 18px; }
.winctl svg { width: 18px; height: 18px; }
.help { width: 18px; height: 18px; border: 1.300px solid #333; border-radius: 50%; text-align: center; font: bold 13px/15px "Noto Sans", sans-serif; }

.toolrow { height: 32px; flex: none; background: #f7f7f7; border-bottom: 1px solid #808080; }
.tools { width: 593px; height: 31px; border-right: 1px solid #808080; display: flex; align-items: center; padding-left: 3px; }
.tools svg { width: 27px; height: 19px; }
.tools .narrow { width: 16px; }
.spell { width: 27px; height: 24px; padding-left: 4px; font-size: 10.500px; line-height: 13px; letter-spacing: -.4px; color: #222; }
.tools .spell svg { width: 13px; height: 10px; margin: -1px 0 0 5px; }
.grip { width: 3px; height: 26px; margin-right: 8px; background: repeating-linear-gradient(#aaa 0 2px, transparent 2px 4px); }
.seps { width: 9px; height: 22px; margin: 0 4px 0 2px; border: solid #999; border-width: 0 1px; }
.q-text { font: bold 11px "Noto Sans", sans-serif; fill: #297ba0; }
.a-text { font: bold 13px "Liberation Serif", serif; fill: #297ba0; }
.v-text { font: bold 13px "Liberation Serif", serif; fill: #3484a8; }
.ag-text { font: bold 5px "Noto Sans", sans-serif; fill: #e48212; }
.sw-text { font: bold 11px "Liberation Sans", sans-serif; letter-spacing: 1px; fill: #fff; }
.sy-text { font: bold 8px "Noto Sans", sans-serif; fill: #fff; stroke: #111; stroke-width: 1.500px; paint-order: stroke; }

.ribbon { height: 81px; flex: none; display: flex; background: #f7f7f7; position: relative; }
.rgroup { display: flex; height: 78px; margin-top: 1px; padding: 5px 0 0 3px; }
.rgroup.first { width: 296px; padding-left: 2px; border-right: 1px solid #bbb; }
.rb { display: flex; flex-direction: column; align-items: center; color: #111; font-size: 11.500px; line-height: 13px; letter-spacing: -.3px; text-align: center; white-space: nowrap; }
.rb svg { width: 20px; height: 20px; }
.off { color: #b5b5b5; letter-spacing: -.25px; }
.w72 { width: 72px; } .w71 { width: 71px; } .w40 { width: 40px; } .w38 { width: 38px; } .w60 { width: 60px; } .w58 { width: 58px; } .w42 { width: 42px; } .w53 { width: 53px; } .w67 { width: 67px; } .w56 { width: 56px; } .w51 { width: 51px; }
.collapse { width: 12px; height: 8px; position: absolute; right: 8px; bottom: 9px; }

.cmdtabs { height: 23px; flex: none; display: flex; background: linear-gradient(#808080 0 1px, #000 1px); }
.tab { height: 23px; background: #d2d2d2; border: solid #808080; border-width: 1px 1px 1px 0; text-align: center; line-height: 21px; font-size: 12px; letter-spacing: -.33px; white-space: nowrap; color: #222; }
.tab.on { background: #f7f7f7; border-top-color: #f7f7f7; border-bottom-color: #f7f7f7; font-weight: 600; }
.t67 { width: 67px; } .t56 { width: 56px; } .t57 { width: 57px; } .t60 { width: 60px; } .t88 { width: 88px; } .t133 { width: 133px; }
.t121 { width: 121px; padding-right: 2px; letter-spacing: -.25px; }
.docctl { margin-left: auto; padding: 7px 11px 0 0; display: flex; gap: 9px; color: #424242; }
.docctl svg { width: 17px; height: 17px; }

.work { height: 522px; flex: none; display: flex; }
.panel { width: 266px; flex: none; background: #f7f7f7; border-right: 1px solid #aaa; padding-right: 2px; display: flex; flex-direction: column; }
.strip { height: 24px; border-right: 1px solid #aaa; display: flex; flex-direction: column; align-items: center; }
.stripbox { width: 100%; height: 5px; border-bottom: 1px solid #bbb; }
.strip .dot { margin-top: 4px; }
.strip::after { content: ""; width: 100%; border-top: 1px solid #bbb; margin-top: 4px; }
.dot { width: 6px; height: 6px; border: 1px solid #888; border-radius: 50%; background: #ccc; }
.ptabs { height: 26px; flex: none; display: flex; padding-left: 2px; overflow: hidden; position: relative; border-right: 1px solid #aaa; background: #d2d2d2; }
.pt { width: 40px; flex: none; border-top: 1px solid #888; border-right: 1px solid #888; border-bottom: 1px solid #bbb; display: flex; align-items: center; justify-content: center; }
.pt.on { background: #f7f7f7; border-bottom: 0; }
.pt svg { width: 19px; height: 19px; }
.pt.last { justify-content: flex-start; padding-left: 9px; }
.pscroll { position: absolute; right: 0; top: 6px; display: flex; }
.pscroll span { width: 18px; height: 20px; background: #fafafa; border: 1px solid #aaa; text-align: center; font: 11px/17px "DejaVu Sans", sans-serif; color: #000; }
.filterbox { height: 26px; flex: none; width: 255px; margin-left: 5px; border: 1px solid #bdbdbd; padding: 3px 1px; }
.filterbox svg { width: 24px; height: 19px; }
.treebox { height: 424px; flex: none; display: flex; border-left: 1px solid #bbb; border-right: 1px solid #aaa; }
.tree { width: 247px; overflow: hidden; }
.row { height: 22px; display: flex; align-items: center; padding-left: 8px; white-space: nowrap; color: #000; font-size: 11.500px; letter-spacing: -.14px; }
.row s { text-decoration: none; letter-spacing: 1.100px; }
.row.wide { letter-spacing: -.05px; }
.row.tight { letter-spacing: -.2px; }
.row.root { padding-left: 4px; letter-spacing: -.33px; }
.state { letter-spacing: -.07px; }
.row svg { width: 18px; height: 18px; margin-right: 5px; }
.row.root svg { margin-right: 4px; }
.row em { width: 18px; flex: none; }
.row em.exp::before { content: ""; display: block; width: 0; border: 4px solid transparent; border-left: 5px solid #555; border-right: 0; margin-left: 1px; }
.vscroll { width: 15px; display: flex; flex-direction: column; align-items: center; background: #f0f0f0; padding: 6px 0 4px; }
.vscroll svg { width: 10px; height: 8px; }
.vthumb { width: 15px; height: 185px; background: #cdcdcd; margin: 3px 0 209px; }
.hscroll { height: 18px; flex: none; display: flex; align-items: center; background: #f0f0f0; border-left: 1px solid #bbb; border-right: 1px solid #aaa; padding-left: 4px; }
.hscroll svg { width: 8px; height: 10px; }
.hthumb { width: 104px; height: 16px; background: #cdcdcd; margin: 0 113px 0 5px; }
.pbottom { flex: 1; border-top: 1px solid #bbb; border-bottom: 1px solid #bbb; }

.viewport { flex: 1; position: relative; background: linear-gradient(#030303, #404040); }
.model { width: 1100px; height: 522px; }
.hud { position: absolute; left: 370px; top: 5px; display: flex; opacity: .85; }
.hud svg { width: 26px; height: 19px; }
.hud .hd { width: 13.700px; }
.handle { position: absolute; left: 0; top: 230px; width: 8px; height: 39px; background: #f7f7f7; border: 1px solid #999; border-left: 0; display: flex; align-items: center; }
.taskpane { position: absolute; right: 0; top: 29px; width: 26px; border: 1px solid #888; border-width: 1px 0 0 1px; }
.taskpane span { height: 24px; display: flex; align-items: center; justify-content: center; background: #d5d5d5; border-bottom: 1px solid #999; padding-right: 1px; }
.taskpane .on { background: #fafafa; }
.taskpane svg { width: 19px; height: 19px; }

.bottomtabs { height: 16px; flex: none; display: flex; background: #f7f7f7; border-top: 1px solid #808080; border-bottom: 1px solid #808080; line-height: 13px; }
.nav { width: 67px; padding-left: 2px; display: flex; background: #c8c8c8; border-right: 1px solid #808080; }
.nav svg { width: 16px; height: 14px; background: #b0b0b0; border: 1px solid #969696; }
.bt { text-align: center; border-right: 1px solid #808080; background: #d2d2d2; white-space: nowrap; letter-spacing: -.25px; line-height: 12px; }
.model-tab { width: 57px; padding-left: 3px; background: #f7f7f7; font-weight: 700; color: #000; }
.views { width: 68px; }
.motion { width: 108px; padding-right: 9px; }
.status { height: 18px; flex: none; display: flex; align-items: center; background: #f7f7f7; font-size: 11.500px; letter-spacing: -.2px; white-space: nowrap; padding-left: 1px; color: #111; }
.prod { width: 956px; }
.under { width: 94px; letter-spacing: -.27px; }
.editing { width: 119px; letter-spacing: -.1px; }
.rebuild { width: 90px; height: 16px; padding-left: 1px; }
.rebuild svg { width: 16px; height: 15px; }
.units { width: 54px; letter-spacing: 0; }
.up { width: 0; border: 3px solid transparent; border-bottom-color: #444; border-top: 0; }
.tag { width: 17px; height: 15px; margin-left: 26px; }
.editing { height: 16px; line-height: 16px; border-right: 0; background: linear-gradient(#bbb, #bbb) 113px 0 / 1px 16px no-repeat; }

.taskbar { height: 38px; flex: none; display: flex; background: #1b2b2f; color: #fff; }
.start { width: 48px; display: flex; align-items: center; justify-content: center; }
.start svg { width: 20px; height: 20px; }
.tsearch { width: 344px; border: 1px solid #555; border-bottom: 0; background: #333; display: flex; align-items: center; gap: 11px; padding: 1px 0 0 11px; color: #d0d0d0; font-size: 14px; }
.tsearch svg { width: 17px; height: 17px; }
.pins { display: flex; }
.pins span { width: 49px; display: flex; align-items: center; justify-content: center; padding-top: 1px; }
.pins span:first-child { padding-right: 2px; }
.pins span.active { width: 45px; margin: 0 2px; background: #4a575a; }
.pins svg { width: 24px; height: 24px; }
.pins svg.small { width: 19px; height: 18px; margin-right: 4px; }
.ring { width: 16px; height: 16px; border: 2px solid #fff; border-radius: 50%; }
.tray { margin-left: auto; display: flex; align-items: center; }
.tray svg { height: 16px; }
.chev { width: 14px; margin-right: 8px; }
.globe { width: 18px; margin-right: 6px; }
.bat { width: 18px; margin-right: 5px; }
.vol { width: 18px; margin-right: 7px; }
.kbd { width: 24px; margin-right: 10px; }
.lang { width: 36px; font-size: 11.500px; }
.clock { width: 59px; font-size: 11.500px; line-height: 18px; text-align: center; letter-spacing: -.4px; white-space: nowrap; }
.note { width: 37px; margin-left: 17px; display: flex; align-items: center; }
.note svg { width: 18px; height: 18px; }
.note b { width: 17px; height: 17px; margin: 14px 0 0 -9px; border: 1px solid #999; border-radius: 50%; background: #333; font-size: 11px; line-height: 15px; text-align: center; }
.desk { width: 4px; height: 38px; border-left: 1px solid #89979a; }
```
